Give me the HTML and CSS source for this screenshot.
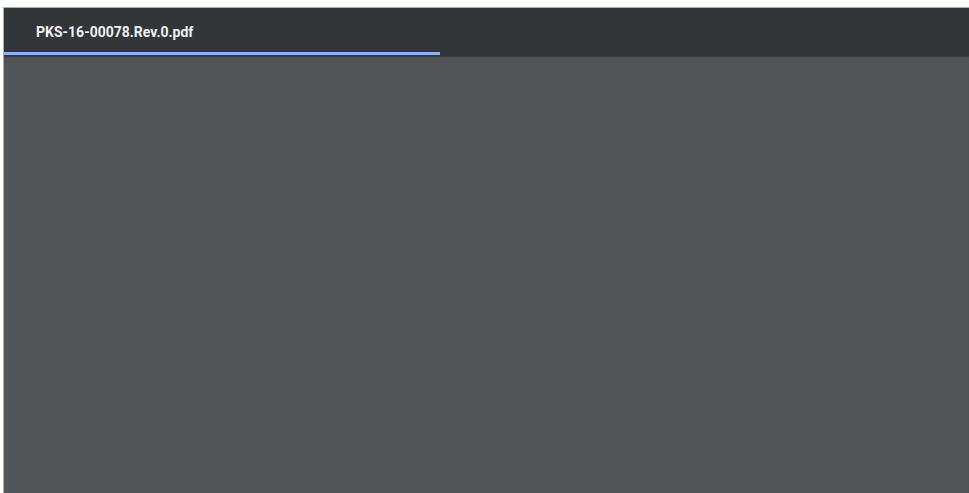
FILE: index.html
```html
<!DOCTYPE html>
<html>
<head>
<meta charset="utf-8">
<link rel="stylesheet" href="styles.css">
</head>
<body>
<div class="frame">
  <div class="toolbar">
    <div class="title">PKS-16-00078.Rev.0.pdf</div>
    <div class="progress"><div class="bar" style="width:436px"></div></div>
  </div>
  <div class="viewer"></div>
</div>
</body>
</html>
```
FILE: styles.css
```css
html, body {
  margin: 0;
  padding: 0;
  background: #ffffff;
  height: 100%;
  overflow: hidden;
}
body {
  padding: 7px 0 0 3px;
  box-sizing: border-box;
  font-family: Roboto, "Liberation Sans", sans-serif;
}
.frame {
  display: flex;
  flex-direction: column;
  height: 100%;
  border-top: 1px solid #8fb6cc;
  border-left: 1px solid #8fb6cc;
  box-sizing: border-box;
}
.toolbar {
  background: #323639;
  height: 48px;
  display: flex;
  flex-direction: column;
  justify-content: flex-end;
  flex: none;
}
.title {
  color: #f1f1f1;
  font-size: 14px;
  font-weight: 700;
  padding-left: 32px;
  height: 20px;
  line-height: 20px;
  margin-bottom: 10px;
}
.progress {
  height: 3px;
  margin-bottom: 1px;
}
.bar {
  height: 3px;
  background: #8ab4f8;
}
.viewer {
  flex: 1;
  background: #525659;
  box-shadow: inset 0 2px 2px -1px rgba(0,0,0,0.35);
}
```
